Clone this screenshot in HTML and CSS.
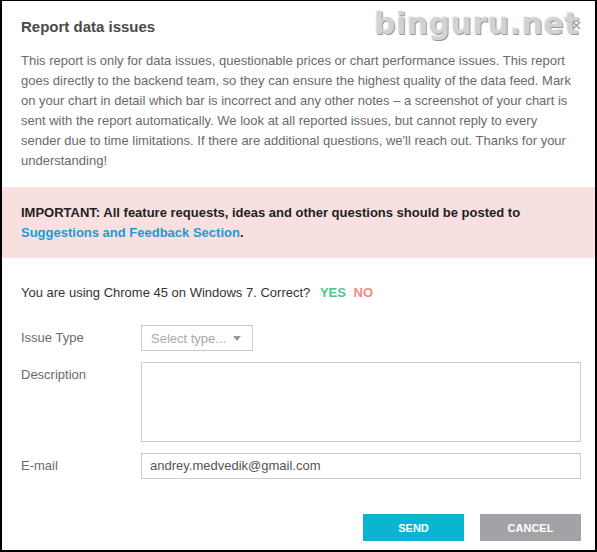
FILE: index.html
```html
<!DOCTYPE html>
<html lang="en">
<head>
    <meta charset="UTF-8">
    <title>Report data issues</title>
    <link rel="stylesheet" href="styles.css">
</head>
<body>

<div class="dialog">
    <span class="watermark">binguru.net</span>
    <svg class="close" width="9" height="9" viewBox="0 0 9 9"><path d="M1 1L8 8M8 1L1 8" stroke="#999" stroke-width="1.4"/></svg>

    <h1>Report data issues</h1>
    <p class="intro">This report is only for data issues, questionable prices or chart performance issues. This report goes directly to the backend team, so they can ensure the highest quality of the data feed. Mark on your chart in detail which bar is incorrect and any other notes &ndash; a screenshot of your chart is sent with the report automatically. We look at all reported issues, but cannot reply to every sender due to time limitations. If there are additional questions, we'll reach out. Thanks for your understanding!</p>

    <div class="notice">
        IMPORTANT: All feature requests, ideas and other questions should be posted to <a href="#">Suggestions and Feedback Section</a>.
    </div>

    <div class="browser">
        You are using Chrome 45 on Windows 7. Correct?
        <a href="#" class="yes">YES</a>
        <a href="#" class="no">NO</a>
    </div>

    <div class="form">
        <label>Issue Type</label>
        <div><span class="select">Select type... <i class="caret"></i></span></div>

        <label>Description</label>
        <div class="textarea"></div>

        <label>E-mail</label>
        <div class="input">andrey.medvedik@gmail.com</div>
    </div>

    <div class="buttons">
        <button class="send">SEND</button>
        <button class="cancel">CANCEL</button>
    </div>
</div>

</body>
</html>
```

FILE: styles.css
```css
html, body {
    margin: 0;
    height: 100%;
}

body {
    font-family: "Liberation Sans", Arial, sans-serif;
    background-color: #fff;
}

.dialog {
    position: relative;
    box-sizing: border-box;
    height: 552px;
    border: 2px solid #000;
    border-top-width: 1px;
    background-color: #fff;
}

.watermark {
    position: absolute;
    top: 5px;
    right: 16px;
    font-family: "DejaVu Sans", sans-serif;
    font-weight: bold;
    font-size: 30px;
    letter-spacing: 0.5px;
    color: #d2d2d2;
    text-shadow: 1px 1px 0 #999, -1px -1px 0 #f4f4f4;
    z-index: 2;
}

.close {
    position: absolute;
    top: 20px;
    right: 14px;
    z-index: 1;
}

h1 {
    margin: 0;
    padding: 17px 19px 0;
    font-size: 15px;
    font-weight: bold;
    color: #4a4a4a;
    line-height: 18px;
}

.intro {
    margin: 15px 0 0;
    padding: 0 19px;
    font-size: 13px;
    line-height: 20px;
    color: #6a6a6a;
}

.notice {
    margin-top: 16px;
    padding: 16px 19px 15px;
    background-color: #f8e0e0;
    font-size: 13px;
    font-weight: bold;
    line-height: 20px;
    color: #222;
}

.notice a {
    color: #1a9ad6;
    text-decoration: none;
}

.browser {
    padding: 25px 19px 0;
    font-size: 13px;
    line-height: 20px;
    color: #333;
}

.browser a {
    font-weight: bold;
    text-decoration: none;
    margin-left: 6px;
}

.browser .yes {
    color: #4cc68e;
}

.browser .no {
    color: #f08c84;
    margin-left: 4px;
}

.form {
    display: grid;
    grid-template-columns: 120px 1fr;
    row-gap: 11px;
    padding: 22px 14px 0 19px;
    font-size: 13px;
    color: #6a6a6a;
}

.form label {
    line-height: 26px;
}

.select {
    display: inline-flex;
    align-items: center;
    gap: 7px;
    box-sizing: border-box;
    height: 26px;
    width: 112px;
    padding: 0 9px;
    border: 1px solid #ccc;
    color: #aaa;
    white-space: nowrap;
}

.caret {
    width: 0;
    height: 0;
    border-left: 4px solid transparent;
    border-right: 4px solid transparent;
    border-top: 5px solid #999;
}

.textarea {
    box-sizing: border-box;
    height: 80px;
    border: 1px solid #ccc;
}

.input {
    box-sizing: border-box;
    height: 26px;
    line-height: 24px;
    padding: 0 8px;
    border: 1px solid #ccc;
    color: #555;
}

.buttons {
    display: flex;
    justify-content: flex-end;
    gap: 16px;
    padding: 35px 14px 0 0;
}

.buttons button {
    width: 101px;
    height: 27px;
    border: none;
    font-family: inherit;
    font-size: 11px;
    font-weight: bold;
    color: #fff;
    cursor: pointer;
}

.send {
    background-color: #0bb5d1;
}

.cancel {
    background-color: #a2a3a7;
}
```
